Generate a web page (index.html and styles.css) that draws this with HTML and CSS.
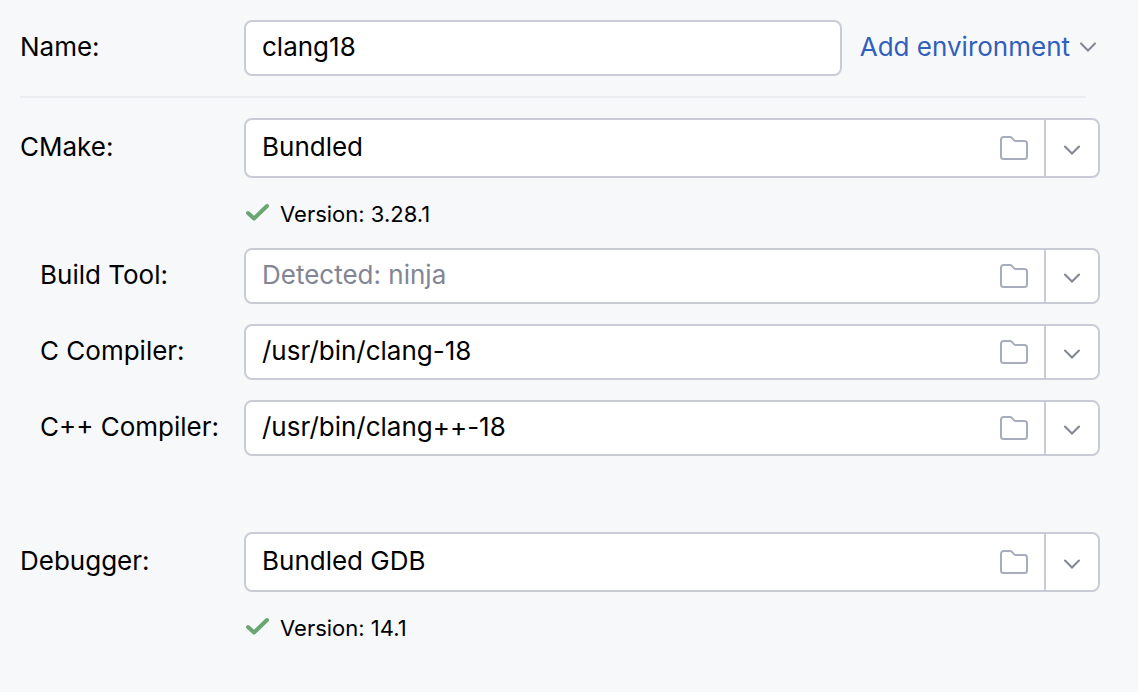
FILE: index.html
```html
<!DOCTYPE html>
<html lang="en">
<head>
  <meta charset="utf-8">
  <meta name="viewport" content="width=device-width, initial-scale=1">
  <title>Toolchain settings</title>
  <link rel="stylesheet" href="styles.css">
</head>
<body>
  <svg class="symbols" aria-hidden="true">
    <symbol id="folder" viewBox="0 0 32 32">
      <path d="M3 7.5A2.5 2.5 0 0 1 5.5 5H12.2a2 2 0 0 1 1.4.6L16.2 8.4a2 2 0 0 0 1.4.6H26.500A2.5 2.5 0 0 1 29 11.5V24.5A2.5 2.5 0 0 1 26.5 27H5.5A2.5 2.5 0 0 1 3 24.5Z" fill="none" stroke="#a8adbd" stroke-width="2"/>
    </symbol>
    <symbol id="chevron" viewBox="0 0 24 24">
      <path d="M5 8.5 12 15.5 19 8.5" fill="none" stroke="#818594" stroke-width="2" stroke-linecap="round"/>
    </symbol>
    <symbol id="check" viewBox="0 0 28 28">
      <path d="M4 13 10 18.500 23 6" fill="none" stroke="#69a671" stroke-width="4" stroke-linecap="round" stroke-linejoin="round"/>
    </symbol>
  </svg>
  <form class="form">
    <div class="row">
      <label class="label" for="name">Name:</label>
      <div class="name-line">
        <input class="text-field" id="name" type="text" value="clang18">
        <a class="link" href="#environment">Add environment<svg class="chevron"><use href="#chevron"/></svg></a>
      </div>
    </div>
    <hr class="divider">
    <div class="row">
      <label class="label" for="cmake">CMake:</label>
      <div class="combo combo-tall">
        <input class="combo-input" id="cmake" type="text" value="Bundled">
        <button class="browse" type="button" aria-label="Browse for CMake"><svg class="folder"><use href="#folder"/></svg></button>
        <button class="drop" type="button" aria-label="CMake options"><svg class="chevron"><use href="#chevron"/></svg></button>
      </div>
    </div>
    <p class="status"><svg class="check"><use href="#check"/></svg>Version: 3.28.1</p>
    <div class="group">
      <div class="row">
        <label class="label label-nested" for="build">Build Tool:</label>
        <div class="combo">
          <input class="combo-input" id="build" type="text" placeholder="Detected: ninja">
          <button class="browse" type="button" aria-label="Browse for build tool"><svg class="folder"><use href="#folder"/></svg></button>
          <button class="drop" type="button" aria-label="Build tool options"><svg class="chevron"><use href="#chevron"/></svg></button>
        </div>
      </div>
      <div class="row">
        <label class="label label-nested" for="cc">C Compiler:</label>
        <div class="combo">
          <input class="combo-input" id="cc" type="text" value="/usr/bin/clang-18" spellcheck="false">
          <button class="browse" type="button" aria-label="Browse for C compiler"><svg class="folder"><use href="#folder"/></svg></button>
          <button class="drop" type="button" aria-label="C compiler options"><svg class="chevron"><use href="#chevron"/></svg></button>
        </div>
      </div>
      <div class="row">
        <label class="label label-nested" for="cxx">C++ Compiler:</label>
        <div class="combo">
          <input class="combo-input" id="cxx" type="text" value="/usr/bin/clang++-18" spellcheck="false">
          <button class="browse" type="button" aria-label="Browse for C++ compiler"><svg class="folder"><use href="#folder"/></svg></button>
          <button class="drop" type="button" aria-label="C++ compiler options"><svg class="chevron"><use href="#chevron"/></svg></button>
        </div>
      </div>
    </div>
    <div class="row row-debugger">
      <label class="label" for="debugger">Debugger:</label>
      <div class="combo combo-tall">
        <input class="combo-input" id="debugger" type="text" value="Bundled GDB">
        <button class="browse" type="button" aria-label="Browse for debugger"><svg class="folder"><use href="#folder"/></svg></button>
        <button class="drop" type="button" aria-label="Debugger options"><svg class="chevron"><use href="#chevron"/></svg></button>
      </div>
    </div>
    <p class="status"><svg class="check"><use href="#check"/></svg>Version: 14.1</p>
  </form>
</body>
</html>
```
FILE: styles.css
```css
* {
  box-sizing: border-box;
}

body {
  margin: 0;
  background: #f7f8fa;
  color: #000;
  font-family: Inter, "Liberation Sans", sans-serif;
  font-size: 26px;
  line-height: 32px;
}

input,
button {
  margin: 0;
  border: 0;
  background: none;
  color: inherit;
  font: inherit;
}

.symbols {
  display: none;
}

.form {
  padding: 20px 38px 20px 20px;
}

.row {
  display: grid;
  grid-template-columns: 224px minmax(0, 1fr);
  align-items: center;
}

.label {
  padding-bottom: 2px;
  white-space: nowrap;
}

.label-nested {
  padding-left: 20px;
}

.name-line {
  display: flex;
  align-items: center;
  gap: 18px;
}

.text-field {
  flex: 1;
  min-width: 0;
  height: 56px;
  padding: 0 16px 3px;
  border: 2px solid #c9ccd6;
  border-radius: 8px;
  background: #fff;
}

.link {
  display: flex;
  align-items: center;
  gap: 6px;
  padding-bottom: 2px;
  color: #315fbd;
  text-decoration: none;
  white-space: nowrap;
}

.divider {
  height: 2px;
  margin: 20px 14px 20px 0;
  border: 0;
  background: #ebecf0;
}

.combo {
  display: flex;
  height: 56px;
  border: 2px solid #c9ccd6;
  border-radius: 8px;
  background: #fff;
}

.combo-tall {
  height: 60px;
}

.combo-input {
  flex: 1;
  min-width: 0;
  padding: 0 16px 2px;
}

.combo-input::placeholder {
  color: #818594;
  opacity: 1;
}

.browse,
.drop {
  display: flex;
  align-items: center;
  justify-content: center;
  padding: 0;
}

.browse {
  width: 60px;
}

.drop {
  width: 54px;
  padding-top: 4px;
  border-left: 2px solid #c9ccd6;
}

.folder {
  width: 32px;
  height: 32px;
}

.chevron {
  width: 24px;
  height: 24px;
}

.check {
  width: 28px;
  height: 28px;
}

.status {
  display: flex;
  align-items: center;
  gap: 8px;
  margin: 20px 0 18px 224px;
  font-size: 22px;
}

.group {
  display: grid;
  gap: 20px;
}

.row-debugger {
  margin-top: 76px;
}
```
